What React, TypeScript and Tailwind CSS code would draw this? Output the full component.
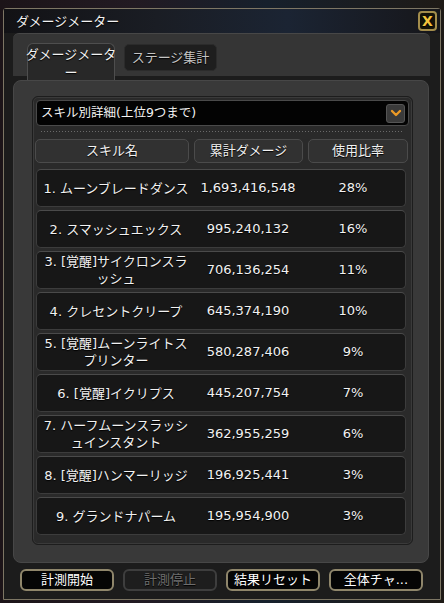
import { ChevronDown } from 'lucide-react';

const FONT = '"DejaVu Sans", "Noto Sans CJK JP", sans-serif';

const ROWS = [
  { name: ['1. ムーンブレードダンス'], damage: '1,693,416,548', ratio: '28%' },
  { name: ['2. スマッシュエックス'], damage: '995,240,132', ratio: '16%' },
  { name: ['3. [覚醒]サイクロンスラ', 'ッシュ'], damage: '706,136,254', ratio: '11%' },
  { name: ['4. クレセントクリープ'], damage: '645,374,190', ratio: '10%' },
  { name: ['5. [覚醒]ムーンライトス', 'プリンター'], damage: '580,287,406', ratio: '9%' },
  { name: ['6. [覚醒]イクリプス'], damage: '445,207,754', ratio: '7%' },
  { name: ['7. ハーフムーンスラッシ', 'ュインスタント'], damage: '362,955,259', ratio: '6%' },
  { name: ['8. [覚醒]ハンマーリッジ'], damage: '196,925,441', ratio: '3%' },
  { name: ['9. グランドナパーム'], damage: '195,954,900', ratio: '3%' },
];

const BUTTONS = [
  { label: '計測開始', disabled: false },
  { label: '計測停止', disabled: true },
  { label: '結果リセット', disabled: false },
  { label: '全体チャ...', disabled: false },
];

export default function App() {
  return (
    <div
      className="w-[444px] h-[603px] bg-[linear-gradient(90deg,#1c1418,#221a22_30%,#16202c_60%,#1e1a16)] pt-[8px] px-[3px] text-[13px] text-[#f2f2f2] [text-shadow:0_1px_1px_#000]"
      style={{ fontFamily: FONT }}
    >
      <div className="h-[592px] border border-[#7d7664] rounded-t-[3px] bg-[#1c1c1c] flex flex-col">
        {/* title bar */}
        <div className="h-[24px] flex items-center justify-between pl-[12px] pr-[3px] bg-[linear-gradient(90deg,#121215,#1a1d24_35%,#1b2433_65%,#16161a)]">
          <span className="leading-none">ダメージメーター</span>
          <div className="w-[19px] h-[20px] rounded-[4px] border-2 border-[#a38d4c] bg-[#141208] flex items-center justify-center text-[#f3c33c] font-bold text-[14px] leading-none">
            X
          </div>
        </div>

        {/* tabs */}
        <div className="mx-[9px] mr-[10px] h-[43px] rounded-t-[6px] bg-[#353535] border-t border-[#474747] flex items-start gap-[9px] pl-[14px] pt-[9px]">
          <div className="w-[88px] h-[38px] rounded-t-[6px] bg-[#282828] border border-b-0 border-[#4e4e4e] flex flex-col items-center pt-[2px] leading-[18px] whitespace-nowrap">
            <span>ダメージメータ</span>
            <span>ー</span>
          </div>
          <div className="w-[93px] h-[27px] mt-[1px] rounded-[5px] bg-[#1e1e1e] border border-[#2b2b2b] flex items-center justify-center text-[#c4c4c4]">
            ステージ集計
          </div>
        </div>

        {/* main panel */}
        <div className="mt-[4px] mx-[9px] mr-[11px] h-[483px] rounded-[8px] bg-[#393939] border border-[#474747] pt-[15px] pl-[18px] pr-[15px]">
          <div className="h-[449px] rounded-[6px] bg-[#2a2a2a] border border-[#1d1d1d] shadow-[inset_0_0_0_1px_#3a3a3a] px-[3px] pt-[3px] flex flex-col">
            {/* dropdown */}
            <div className="h-[26px] rounded-[4px] bg-[#030303] border border-[#4a4a4a] flex items-center justify-between pl-[4px] pr-[3px]">
              <span className="text-[12.5px]">スキル別詳細(上位9つまで)</span>
              <div className="w-[19px] h-[19px] rounded-[3px] bg-[#3a3a3a] border border-[#555] flex items-center justify-center">
                <ChevronDown className="w-[16px] h-[16px] text-[#ec9a26]" strokeWidth={3.5} />
              </div>
            </div>

            {/* dotted separator */}
            <div className="mt-[5px] mx-[5px] h-px bg-[linear-gradient(to_right,#6a6a6a_1px,transparent_1px)] bg-[length:3px_1px]" />

            {/* header */}
            <div className="mt-[7px] grid grid-cols-[154px_109px_100px] gap-[5px] -ml-[1px]">
              {['スキル名', '累計ダメージ', '使用比率'].map((h) => (
                <div
                  key={h}
                  className="h-[24px] rounded-[5px] bg-[#313131] border border-[#4b4b4b] flex items-center justify-center"
                >
                  {h}
                </div>
              ))}
            </div>

            {/* rows */}
            <div className="mt-[6px] flex flex-col gap-[3px] w-[370px]">
              {ROWS.map((r) => (
                <div
                  key={r.damage}
                  className="h-[38px] rounded-[5px] bg-[#171717] border border-[#3c3c3c] border-t-[#4a4a4a] grid grid-cols-[158px_106px_1fr] items-center"
                >
                  <div className="flex flex-col items-center leading-[17px] whitespace-nowrap">
                    {r.name.map((line) => (
                      <span key={line}>{line}</span>
                    ))}
                  </div>
                  <div className="text-center">{r.damage}</div>
                  <div className="text-center">{r.ratio}</div>
                </div>
              ))}
            </div>
          </div>
        </div>

        {/* buttons */}
        <div className="mt-[6px] pl-[16px] flex gap-[9px]">
          {BUTTONS.map((b) => (
            <div
              key={b.label}
              className={`w-[94px] h-[22px] rounded-[6px] border-2 flex items-center justify-center ${
                b.disabled
                  ? 'border-[#3e3e3e] bg-[#1e1e1e] text-[#6e6e6e]'
                  : 'border-[#8f866b] bg-[#050505] text-white'
              }`}
            >
              {b.label}
            </div>
          ))}
        </div>
      </div>
    </div>
  );
}
